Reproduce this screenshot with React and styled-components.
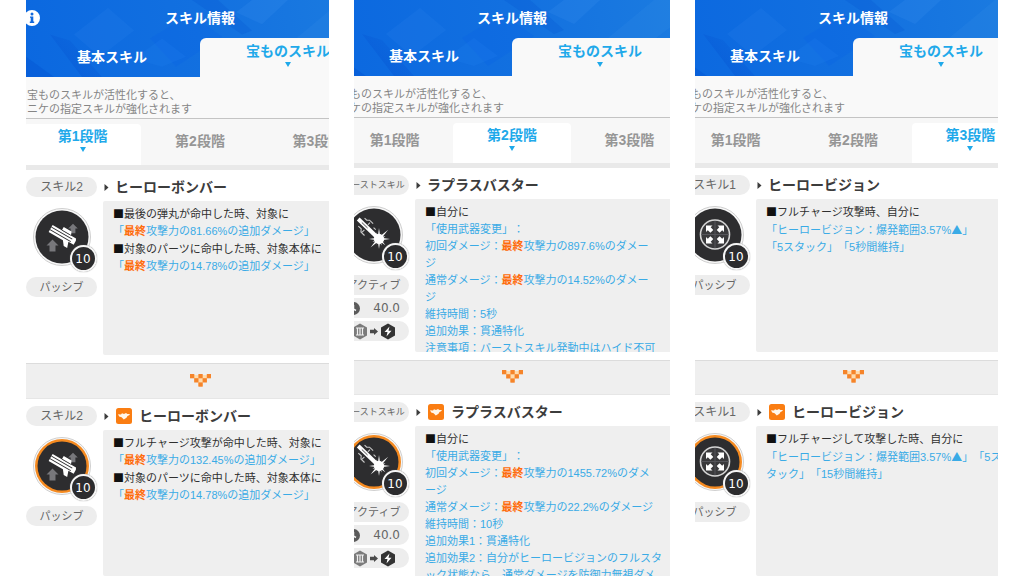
import React from "react";
import styled, { createGlobalStyle, css } from "styled-components";

const Global = createGlobalStyle`
  *, *::before, *::after { box-sizing: border-box; }
  html { background: #fff; }
  body {
    margin: 0;
    font-family: "Liberation Sans", "Noto Sans CJK JP", sans-serif;
    text-spacing-trim: space-all;
    overflow: hidden;
  }
  h1, h2, h3, p { margin: 0; font: inherit; }
  button { border: 0; padding: 0; background: none; font: inherit; color: inherit; cursor: pointer; }
  svg { display: block; flex: none; }
`;

const Board = styled.main`
  display: grid;
  grid-template-columns: 303fr 316fr 303fr;
  gap: 25px;
  height: 100vh;
  padding: 0 26px;
  overflow: hidden;
`;

const Panel = styled.section`
  display: flex;
  overflow: hidden;
  background: #fff;
`;

const Sheet = styled.div`
  display: flex;
  flex-direction: column;
  flex: none;
  width: 352px;
  margin-left: ${(p) => (p.$roomy ? "-2px" : "-18px")};

  & > * {
    flex-shrink: 0;
  }
`;

const Header = styled.header`
  position: relative;
  display: flex;
  flex-direction: column;
  height: ${(p) => (p.$roomy ? 77 : 76)}px;
  background: linear-gradient(80deg, #0b68e0, #1270e0 50%, #1c7ce0);
  color: #fff;
`;

const Facets = styled.svg`
  position: absolute;
  inset: 0;
  width: 100%;
  height: 100%;
`;

const TitleBar = styled.div`
  position: relative;
  display: grid;
  grid-template-columns: 16px 1fr 16px;
  align-items: center;
  height: 38px;
  padding-bottom: 2px;
`;

const SheetTitle = styled.h1`
  font-size: 14px;
  font-weight: 700;
  line-height: 18px;
  text-align: center;
`;

const ModeTabs = styled.div`
  position: relative;
  display: grid;
  grid-template-columns: 1fr 1fr;
  flex: 1;
`;

const TabBase = styled.button`
  display: flex;
  flex-direction: column;
  align-items: center;
  font-size: 14px;
  font-weight: 700;
  line-height: 18px;
`;

const ModeTab = styled(TabBase)`
  justify-content: center;
  padding-bottom: 2px;
  color: #fff;
  ${(p) =>
    p.$active &&
    css`
      justify-content: flex-start;
      gap: 2px;
      padding-top: 4px;
      border-radius: 6px 0 0 0;
      background: #f9f9f9;
      color: #1fa9ea;
    `}
`;

const Notice = styled.p`
  height: 42px;
  padding: 11px 3px 0;
  border-bottom: 1px solid #c4c4c4;
  background: #f9f9f9;
  color: #858585;
  font-size: 11px;
  line-height: 14px;
`;

const StageTabs = styled.div`
  display: grid;
  grid-template-columns: repeat(3, 1fr);
  height: ${(p) => (p.$roomy ? 51 : 50)}px;
  border-bottom: 5px solid #e9e9e9;
  background: #f7f7f7;
`;

const StageTab = styled(TabBase)`
  justify-content: center;
  padding-bottom: 2px;
  color: #969696;
  ${(p) =>
    p.$active &&
    css`
      justify-content: flex-start;
      gap: 2px;
      margin-top: 5px;
      padding-top: 3px;
      border-radius: 4px 4px 0 0;
      background: #fff;
      color: #1fa9ea;
    `}
`;

const SkillBlock = styled.article`
  display: grid;
  grid-template-columns: 71px 1fr;
  gap: 6px;
  padding: 7px 0 0 2px;
  ${(p) => (p.$last ? "flex-grow: 1;" : "padding-bottom: 8px;")}
`;

const Side = styled.div`
  display: flex;
  flex-direction: column;
  align-items: center;
  gap: 3px;
`;

const Pill = styled.div`
  display: flex;
  align-items: center;
  justify-content: ${(p) => (p.$spread ? "space-between" : "center")};
  gap: 4px;
  width: 100%;
  height: 20px;
  padding: 0 9px;
  border-radius: 10px;
  background: #ededed;
  color: #666;
  font-family: ${(p) => (p.$spread ? '"DejaVu Sans", sans-serif' : "inherit")};
  font-size: ${(p) => p.$size || 12}px;
  line-height: 20px;
  white-space: nowrap;
`;

const IconPill = styled(Pill)`
  gap: 2px;
  padding: 0 13px 0 14px;
`;

const LongPill = styled(Pill)`
  padding: 0;
`;

const Medal = styled.div`
  position: relative;
  width: 58px;
  height: 58px;
  margin: 8px 0;
`;

const Level = styled.span`
  position: absolute;
  right: -6px;
  bottom: -6px;
  display: flex;
  align-items: center;
  justify-content: center;
  width: 27px;
  height: 27px;
  border: 2px solid #f6f6f6;
  border-radius: 50%;
  background: #2c2c2e;
  box-shadow: 0 0 1px #777;
  color: #fff;
  font-family: "DejaVu Sans", sans-serif;
  font-size: 12px;
  line-height: 14px;
`;

const Detail = styled.div`
  display: flex;
  flex-direction: column;
  gap: 4px;
`;

const SkillName = styled.h2`
  display: flex;
  align-items: center;
  gap: 6px;
  height: 20px;
  padding-left: 1px;
  color: #3c3c3c;
  font-size: 14px;
  font-weight: 700;
  line-height: 20px;
  white-space: nowrap;
`;

const TreasureBadge = styled.svg`
  margin: 0 1px;
`;

const Effects = styled.div`
  ${(p) =>
    p.$last
      ? "flex: 1;"
      : css`
          height: ${p.$roomy ? 154 : 153}px;
        `}
  padding: 4px 10px 0;
  overflow: hidden;
  background: #efefef;
  border-radius: 2px;
  font-size: 11px;
  line-height: 17px;
  white-space: nowrap;
`;

const Line = styled.p`
  color: ${(p) => (p.$condition ? "#2f2f2f" : "#3aabe6")};
`;

const Mark = styled.span`
  font-family: "Noto Sans CJK JP", sans-serif;
  color: ${(p) => (p.$dark ? "#111" : "inherit")};
`;

const Final = styled.strong`
  color: #ff6b0a;
  font-weight: 700;
`;

const Divider = styled.div`
  display: flex;
  align-items: center;
  justify-content: center;
  height: ${(p) => (p.$roomy ? 36 : 35)}px;
  padding-bottom: 2px;
  border-top: 1px solid #dcdcdc;
  border-bottom: 1px solid #e6e6e6;
  background: #efefef;
`;

function InfoIcon() {
  return (
    <svg width="16" height="16" viewBox="0 0 16 16" role="img" aria-label="情報">
      <circle cx="8" cy="8" r="8" fill="#fff" />
      <circle cx="8" cy="4" r="1.5" fill="#1269dd" />
      <path d="M6 6.4h3.300v5.200h.9v1.400H5.800v-1.400h.9V7.800H6z" fill="#1269dd" />
    </svg>
  );
}

function HeaderFacets() {
  return (
    <Facets viewBox="0 0 352 76" preserveAspectRatio="none" aria-hidden="true">
      <defs>
        <linearGradient id="fold" x1="0" y1="1" x2="1" y2="0">
          <stop offset="0" stopColor="#0450cf" stopOpacity=".5" />
          <stop offset="1" stopColor="#0450cf" stopOpacity="0" />
        </linearGradient>
      </defs>
      <path d="M50 34 84 8l26 22-34 26z" fill="#3b90ee" opacity=".14" />
      <path d="M26 34 46 40 78 76H58z" fill="url(#fold)" />
      <path d="M2 56 30 76H2z" fill="#0450cf" opacity=".35" />
      <path d="M126 38 166 14l32 22-46 30z" fill="#0a62e4" opacity=".3" />
      <path d="M168 0h26l34 30-10 4z" fill="#0553cf" opacity=".25" />
      <path d="M228 0h36l-26 24-26-12z" fill="#4a9cf0" opacity=".16" />
      <path d="M272 38 318 0h34v14l-32 24z" fill="#4a9cf0" opacity=".12" />
      <path d="M110 58 138 38l24 18-24 10z" fill="#2581ee" opacity=".2" />
    </Facets>
  );
}

const Down = () => (
  <svg width="6" height="5" viewBox="0 0 6 5" aria-hidden="true">
    <path d="M0 0h6L3 5z" fill="#1fa9ea" />
  </svg>
);

const Caret = () => (
  <svg width="5" height="7" viewBox="0 0 5 7" aria-hidden="true">
    <path d="M0.5 0 4.5 3.5 0.5 7z" fill="#3c3c3c" />
  </svg>
);

const CHEVRON = [[0, 0], [2, 0], [4, 0], [1, 1], [3, 1], [2, 2]];

const Chevron = () => (
  <svg width="21" height="13" viewBox="0 0 21 13" aria-hidden="true">
    <path d="M1 1h19v3h-3v4h-4v4H8V8H4V4H1z" fill="#ffdcae" />
    {CHEVRON.map(([x, y]) => (
      <rect key={`${x}-${y}`} x={x * 4.2} y={y * 4.2} width="4.3" height="4.3" fill="#f5842a" />
    ))}
  </svg>
);

const Treasure = () => (
  <TreasureBadge width="16" height="16" viewBox="0 0 16 16" role="img" aria-label="宝もの">
    <rect width="16" height="16" rx="2.5" fill="#fa7d12" />
    <path
      d="M2 6.2 5 6.4 6 5.2l2 .8 2-.9 1.4 1L14 6l-.9 1.3-1.6.7-1 1.7L7.800 11.600 5.600 9.200 3.200 8.400z"
      fill="#fff6ea"
    />
  </TreasureBadge>
);

const ArrowUp = ({ x, y, s = 1 }) => (
  <path
    transform={`translate(${x} ${y}) scale(${s})`}
    d="M0-6 6 0H3v6h-6V0h-3z"
    fill="#77777b"
  />
);

const Launcher = () => (
  <g>
    <ArrowUp x={19.500} y={37.500} />
    <ArrowUp x={40} y={20.500} s={0.8} />
    <g transform="translate(29.500 28) rotate(30)">
      <path d="M-14-4.500H13l1 2v4.500h-6l2 6H6L2.500 3.500H-14z" fill="#fff" />
      <path d="M-3.500-8.500H5.500l1.500 3.500h-10.500z" fill="#fff" />
      <path d="M-14-2.200H10M-14 .8H10" stroke="#2d2d2f" strokeWidth=".9" fill="none" />
      <path d="M-3.500-4.800h10" stroke="#2d2d2f" strokeWidth=".7" />
    </g>
  </g>
);

const RAYS = [11, 6, 13, 7, 11, 6, 9, 7, 10, 6, 12, 7, 10, 6, 9, 7];

const Beam = () => (
  <g>
    <g transform="translate(15 14) rotate(44)">
      <path d="M-2-1.500H24v4H-2z" fill="#fff" />
      <path d="M2-4.500h3l2-2h5M3 5.500h4l2 2.500h5M9-5v3M10 4v4M15-4h3" fill="none" stroke="#c8c8c8" strokeWidth="1.100" />
      <path d="M3 .5h8" stroke="#2d2d2f" strokeWidth=".8" />
    </g>
    {RAYS.map((r, i) => (
      <path key={i} transform={`translate(34 33) rotate(${i * 22.5})`} d={`M-1.500 0 0-${r} 1.500 0z`} fill="#fff" />
    ))}
    <circle cx="34" cy="33" r="5" fill="#fff" />
  </g>
);

const Scope = () => (
  <g>
    <circle cx="29" cy="28.500" r="14.500" fill="#3a3a3c" stroke="#d6d6d6" strokeWidth="1.600" />
    <path d="M29 15v27M15.500 28.500h27" stroke="#55555a" strokeWidth="1" />
    {[0, 90, 180, 270].map((a) => (
      <path key={a} transform={`rotate(${a} 29 28.500)`} d="M20 19.500h6.500l-1.800 1.800 2.600 2.600-2.900 2.900-2.600-2.600-1.800 1.800z" fill="#fff" />
    ))}
  </g>
);

const GLYPHS = { launcher: Launcher, beam: Beam, scope: Scope };

function SkillMedal({ glyph, treasure }) {
  const Glyph = GLYPHS[glyph];
  return (
    <Medal>
      <svg width="58" height="58" viewBox="0 0 58 58" aria-hidden="true">
        <circle cx="29" cy="29" r="28.500" fill="#f8f8f8" stroke="#cfcfcf" />
        {treasure && <circle cx="29" cy="29" r="27" fill="#f58a20" />}
        <circle cx="29" cy="29" r={treasure ? 24.5 : 26.5} fill="#2d2d2f" />
        <Glyph />
      </svg>
      <Level>10</Level>
    </Medal>
  );
}

const Clock = () => (
  <svg width="13" height="13" viewBox="0 0 13 13" role="img" aria-label="クールタイム">
    <circle cx="6.500" cy="6.500" r="6.500" fill="#5a5a5a" />
    <path d="M6.500 3v4l2.500 1.500" stroke="#f2f2f2" strokeWidth="1.500" fill="none" />
  </svg>
);

const BurstThree = () => (
  <svg width="16" height="17" viewBox="0 0 16 17" role="img" aria-label="バースト3">
    <path d="M8 .5 15 4.500v8L8 16.500 1 12.500v-8z" fill="#7b7b7b" />
    <path d="M4 5h8M4 12h8M5.500 5v7M8 5v7M10.500 5v7" stroke="#f0f0f0" strokeWidth="1.200" />
  </svg>
);

const BurstArrow = () => (
  <svg width="8" height="7" viewBox="0 0 8 7" aria-hidden="true">
    <path d="M0 1.800h4V0l4 3.500L4 7V5.200H0z" fill="#4a4a4a" />
  </svg>
);

const BurstBolt = () => (
  <svg width="16" height="17" viewBox="0 0 16 17" role="img" aria-label="フルバースト">
    <path d="M8 .5 15 4.500v8L8 16.500 1 12.500v-8z" fill="#333" />
    <path d="M9.500 3.500 4.500 9h3l-1 4.500 5-5.700h-3z" fill="#fff" />
  </svg>
);

/* In effect lines, *…* is the highlighted part. */
function EffectLine({ text }) {
  const condition = text.startsWith("■");
  return (
    <Line $condition={condition}>
      {text.split(/(\*[^*]+\*|■|▲)/).map((part, i) => {
        if (part === "■" || part === "▲") return <Mark key={i} $dark={part === "■"}>{part}</Mark>;
        if (part.startsWith("*")) return <Final key={i}>{part.slice(1, -1)}</Final>;
        return part;
      })}
    </Line>
  );
}

function Skill({ skill, lines, treasure, roomy }) {
  return (
    <SkillBlock $last={treasure}>
      <Side>
        {skill.slot.length > 5 ? <LongPill $size={9}>{skill.slot}</LongPill> : <Pill>{skill.slot}</Pill>}
        <SkillMedal glyph={skill.glyph} treasure={treasure} />
        <Pill $size={11}>{skill.kind}</Pill>
        {skill.cooldown && (
          <>
            <Pill $spread>
              <Clock />
              {skill.cooldown}
            </Pill>
            <IconPill $spread>
              <BurstThree />
              <BurstArrow />
              <BurstBolt />
            </IconPill>
          </>
        )}
      </Side>
      <Detail>
        <SkillName>
          <Caret />
          {treasure && <Treasure />}
          {skill.name}
        </SkillName>
        <Effects $last={treasure} $roomy={roomy}>
          {lines.map((text, i) => (
            <EffectLine key={i} text={text} />
          ))}
        </Effects>
      </Detail>
    </SkillBlock>
  );
}

const STAGES = ["第1段階", "第2段階", "第3段階"];

const SKILLS = [
  {
    slot: "スキル2",
    name: "ヒーローボンバー",
    kind: "パッシブ",
    glyph: "launcher",
    before: [
      "■最後の弾丸が命中した時、対象に",
      "「*最終*攻撃力の81.66%の追加ダメージ」",
      "■対象のパーツに命中した時、対象本体に",
      "「*最終*攻撃力の14.78%の追加ダメージ」",
    ],
    after: [
      "■フルチャージ攻撃が命中した時、対象に",
      "「*最終*攻撃力の132.45%の追加ダメージ」",
      "■対象のパーツに命中した時、対象本体に",
      "「*最終*攻撃力の14.78%の追加ダメージ」",
    ],
  },
  {
    slot: "バーストスキル",
    name: "ラプラスバスター",
    kind: "アクティブ",
    glyph: "beam",
    cooldown: "40.0",
    before: [
      "■自分に",
      "「使用武器変更」：",
      "初回ダメージ：*最終*攻撃力の897.6%のダメー",
      "ジ",
      "通常ダメージ：*最終*攻撃力の14.52%のダメー",
      "ジ",
      "維持時間：5秒",
      "追加効果：貫通特化",
      "注意事項：バーストスキル発動中はハイド不可",
    ],
    after: [
      "■自分に",
      "「使用武器変更」：",
      "初回ダメージ：*最終*攻撃力の1455.72%のダメ",
      "ージ",
      "通常ダメージ：*最終*攻撃力の22.2%のダメージ",
      "維持時間：10秒",
      "追加効果1：貫通特化",
      "追加効果2：自分がヒーロービジョンのフルスタ",
      "ック状態なら、通常ダメージを防御力無視ダメ",
    ],
  },
  {
    slot: "スキル1",
    name: "ヒーロービジョン",
    kind: "パッシブ",
    glyph: "scope",
    before: [
      "■フルチャージ攻撃時、自分に",
      "「ヒーロービジョン：爆発範囲3.57%▲」",
      "「5スタック」「5秒間維持」",
    ],
    after: [
      "■フルチャージして攻撃した時、自分に",
      "「ヒーロービジョン：爆発範囲3.57%▲」「5ス",
      "タック」「15秒間維持」",
    ],
  },
];

function SkillSheet({ skill, stage }) {
  const roomy = stage === 0;
  return (
    <Panel>
      <Sheet $roomy={roomy}>
        <Header $roomy={roomy}>
          <HeaderFacets />
          <TitleBar>
            <InfoIcon />
            <SheetTitle>スキル情報</SheetTitle>
          </TitleBar>
          <ModeTabs>
            <ModeTab type="button">基本スキル</ModeTab>
            <ModeTab type="button" $active>
              宝ものスキル
              <Down />
            </ModeTab>
          </ModeTabs>
        </Header>
        <Notice>
          宝ものスキルが活性化すると、
          <br />
          ニケの指定スキルが強化されます
        </Notice>
        <StageTabs $roomy={roomy}>
          {STAGES.map((label, i) => (
            <StageTab key={label} type="button" $active={i === stage}>
              {label}
              {i === stage && <Down />}
            </StageTab>
          ))}
        </StageTabs>
        <Skill skill={skill} lines={skill.before} roomy={roomy} />
        <Divider $roomy={roomy}>
          <Chevron />
        </Divider>
        <Skill skill={skill} lines={skill.after} treasure roomy={roomy} />
      </Sheet>
    </Panel>
  );
}

export default function App() {
  return (
    <>
      <Global />
      <Board>
        {SKILLS.map((skill, i) => (
          <SkillSheet key={skill.name} skill={skill} stage={i} />
        ))}
      </Board>
    </>
  );
}
